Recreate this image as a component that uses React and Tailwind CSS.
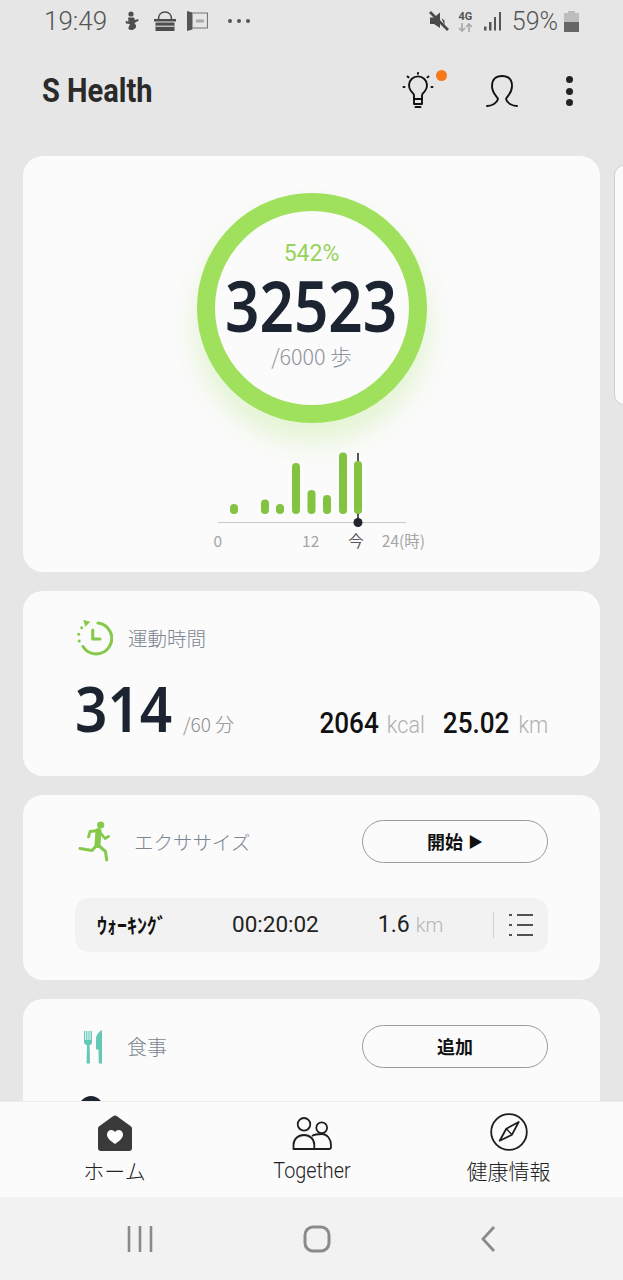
import React from "react";

const jp = { fontFamily: '"Noto Sans CJK JP", Roboto, sans-serif' };
const sans = "font-['Roboto','Noto_Sans_CJK_JP',sans-serif]";

function Bulb() {
  return (
    <svg width="34" height="40" viewBox="0 0 34 40" fill="none" stroke="#111" strokeWidth="1.900" strokeLinecap="round" strokeLinejoin="round">
      <path d="M13 28v-3.500c0-2-1.500-2.500-3-4.500a9 9 0 1 1 14 0c-1.500 2-3 2.500-3 4.500V28z" />
      <path d="M13 28h8v5h-8z" />
      <path d="M14.500 36h5" strokeWidth="2" />
      <path d="M17 2v.8M6.500 5.500l1 .8M27.500 5.500l-1 .8M2.500 16h1M30.500 16h1" strokeWidth="2" />
    </svg>
  );
}

function Person() {
  return (
    <svg width="32" height="34" viewBox="0 0 32 34" fill="none" stroke="#111" strokeWidth="1.900" strokeLinecap="round">
      <path d="M1 32C6 32 11 29 12 25C12 23 6 20 6 12C6 5 10 2 16 2C22 2 26 5 26 12C26 20 20 23 20 25C21 29 26 32 31 32" />
    </svg>
  );
}

function Chart() {
  const bars = [
    [230, 504], [261, 499.500], [276, 504], [292, 463], [307.500, 490], [323, 495], [339, 452.500], [354, 461],
  ];
  return (
    <svg width="200" height="80" viewBox="212 450 200 80" className="block">
      <line x1="218" y1="522.500" x2="406" y2="522.500" stroke="#c9c9c9" strokeWidth="1.200" />
      <line x1="358" y1="453" x2="358" y2="522" stroke="#1b1f28" strokeWidth="1.500" />
      {bars.map(([x, y]) => (
        <rect key={x} x={x} y={y} width="8" height={514 - y} rx="4" fill="#84c341" />
      ))}
      <circle cx="358" cy="522.500" r="4.500" fill="#22252c" />
    </svg>
  );
}

function ClockIcon() {
  return (
    <svg width="36" height="36" viewBox="0 0 36 36" fill="none" stroke="#84c94a" strokeWidth="3" strokeLinecap="round" strokeLinejoin="round">
      <path d="M21 3A15.500 15.500 0 1 1 6 26.500" />
      <path d="M15.700 10v9H23" />
      <circle cx="4.700" cy="7.700" r="1.500" fill="#84c94a" stroke="none" />
      <circle cx="1.700" cy="14.300" r="1.500" fill="#84c94a" stroke="none" />
      <circle cx="2.200" cy="21" r="1.500" fill="#84c94a" stroke="none" />
      <path d="M6.300 0l7 1.700-5 5z" fill="#84c94a" stroke="none" />
    </svg>
  );
}

function Runner() {
  return (
    <svg width="32" height="42" viewBox="0 0 32 42" fill="none" stroke="#84c94a" strokeLinecap="round" strokeLinejoin="round">
      <circle cx="22.700" cy="4" r="3.600" fill="#84c94a" stroke="none" />
      <path d="M20.500 10L19.500 24" strokeWidth="6" />
      <path d="M20 9.500L12 10.500 10.500 16M21 10L27 17.500 30.500 15.500" strokeWidth="2.800" />
      <path d="M20 24L27.500 30.500 28.700 39" strokeWidth="3" />
      <path d="M19 24L14 29.500 2 27.500" strokeWidth="3" />
    </svg>
  );
}

function Cutlery() {
  return (
    <svg width="20" height="34" viewBox="0 0 20 34" fill="#63c8b4">
      <path d="M1 1h1.200v9h1V1h1.200v9h1V1h1.200v9h1V1H9v11.500c0 1.500-1.500 2.300-2.400 2.800L7 33.500H3.600L4 15.300c-1-.5-3-1.300-3-2.800z" />
      <path d="M19 0v33.500h-3.200l-.3-14h-2.500V9c0-4 3-7.500 6-9z" />
    </svg>
  );
}

function ListIcon() {
  return (
    <svg width="26" height="24" viewBox="0 0 26 24" stroke="#1c1c1c" strokeWidth="1.500">
      <path d="M1 2h3M9 2h16M1 12h3M9 12h16M1 22h3M9 22h16" />
    </svg>
  );
}

function HomeIcon() {
  return (
    <svg width="36" height="37" viewBox="0 0 36 37" className="block">
      <path d="M1 13.500c0-1 .5-1.700 1.200-2.300L16 1.200c1.200-.9 2.800-.9 4 0l13.800 10c.7.6 1.200 1.300 1.200 2.300V33a3 3 0 0 1-3 3H4a3 3 0 0 1-3-3z" fill="#3a3a3a" />
      <path d="M18 29c-5-3.500-8-6-8-9.500 0-2.500 2-4.500 4.300-4.500 1.500 0 2.900.7 3.700 2 .8-1.300 2.200-2 3.700-2 2.300 0 4.300 2 4.300 4.500 0 3.500-3 6-8 9.500z" fill="#fff" />
    </svg>
  );
}

function PeopleIcon() {
  return (
    <svg width="40" height="37" viewBox="0 0 40 37" fill="none" stroke="#1e1e1e" strokeWidth="1.800" strokeLinejoin="round" className="block">
      <circle cx="12" cy="10.300" r="6.300" />
      <circle cx="29.700" cy="13.700" r="5.400" />
      <path d="M1.500 35V31C1.500 25 6 21 12 21C18 21 22.300 25 22.300 31V35Z" />
      <path d="M20 22C22 20.500 25 20 30 20C35 20 39 25 39 31V33A2 2 0 0 1 37 35H22.300" />
    </svg>
  );
}

function CompassIcon() {
  return (
    <svg width="38" height="38" viewBox="0 0 38 38" fill="none" stroke="#1e1e1e" strokeWidth="1.800" strokeLinejoin="round" className="block">
      <circle cx="19" cy="19" r="17.800" />
      <path d="M28.700 9L22 21.700 9.700 27.700 16.300 15.700z" />
      <path d="M16.300 15.700L22 21.700" strokeWidth="1.400" />
    </svg>
  );
}

function StatusIcons() {
  return (
    <div className="flex items-center ml-[16px]">
      <svg width="19" height="20" viewBox="0 0 19 20" fill="#4d4d4d">
        <circle cx="8" cy="3" r="2.600" />
        <path d="M5 6.500h6l1 2.500 3-1 .8 1.500-4.300 2.500 1.500 2.500c.5 2-1 4.500-5 4.500-2 0-3-1-2.500-2.500L7 13 3 12.500 2.500 10l3 .5z" />
      </svg>
      <svg width="24" height="20" viewBox="0 0 24 20" fill="#4d4d4d" className="ml-[11px]">
        <path d="M5.500 8C5.500 4 8 1 12 1s6.500 3 6.500 7" fill="none" stroke="#4d4d4d" strokeWidth="1.600" />
        <path d="M1 8h22v2.500H1zM2.500 11.500h19V20h-19z" />
        <path d="M2.500 14.500h19V16h-19z" fill="#bdbdbd" />
      </svg>
      <svg width="21" height="20" viewBox="0 0 21 20" fill="none" className="ml-[10px]">
        <path d="M0 0l5.500 1.500v17L0 20z" fill="#555" />
        <path d="M5.500 2h15v15h-15" stroke="#777" strokeWidth="1.200" />
        <path d="M9 8.500h8v3H9z" fill="#aaa" />
      </svg>
      <div className="flex gap-[5px] ml-[20px]">
        <span className="w-[4px] h-[4px] rounded-full bg-[#555]" />
        <span className="w-[4px] h-[4px] rounded-full bg-[#555]" />
        <span className="w-[4px] h-[4px] rounded-full bg-[#555]" />
      </div>
    </div>
  );
}

function StatusRight() {
  return (
    <div className="flex items-center">
      <svg width="20" height="20" viewBox="0 0 20 20" fill="#4a4a4a">
        <path d="M1 6.500h4L11 1.500V17L5 13H1z" />
        <path d="M12.500 7l3 2.500v5z" />
        <path d="M1 1l18 18" stroke="#4a4a4a" strokeWidth="2.600" />
      </svg>
      <div className="flex flex-col items-center ml-[9px] w-[15px]">
        <span className="text-[11px] leading-[11px] font-bold text-[#555]">4G</span>
        <svg width="15" height="9" viewBox="0 0 15 9" stroke="#aaa" strokeWidth="1.700" fill="none" className="mt-[1px]">
          <path d="M4 0v8M1 5l3 3 3-3M11 9V1M8 4l3-3 3 3" />
        </svg>
      </div>
      <svg width="18" height="20" viewBox="0 0 18 20" fill="#555" className="ml-[11px]">
        <rect x="0" y="15.500" width="2.500" height="4" />
        <rect x="5" y="11" width="2.500" height="8.500" />
        <rect x="10" y="6" width="2" height="13.500" />
        <rect x="15" y="1" width="2" height="18.500" />
      </svg>
      <span className="ml-[10px] mt-[2px] text-[25px] leading-[30px] text-[#555] font-light">59%</span>
      <svg width="15" height="21" viewBox="0 0 15 21" className="ml-[6px]">
        <path d="M4 0h7v2h4v19H0V2h4z" fill="#bdbdbd" />
        <rect x="0" y="11" width="15" height="10" fill="#666" />
      </svg>
    </div>
  );
}

function Card({ children, className = "" }) {
  return <section className={`rounded-[20px] bg-[#fbfbfb] ${className}`}>{children}</section>;
}

function PillButton({ children }) {
  return (
    <button className="w-[186px] h-[43px] rounded-full border-[1.500px] border-[#999] text-[18px] font-bold text-[#111] flex items-center justify-center" style={jp}>
      {children}
    </button>
  );
}

export default function App() {
  return (
    <div className={`w-[623px] h-[1280px] overflow-hidden relative flex flex-col bg-[#e6e6e6] ${sans}`}>
      <header className="shrink-0">
        <div className="h-[42px] flex items-center justify-between pl-[44px] pr-[44px]">
          <div className="flex items-center">
            <span className="text-[26px] leading-[30px] text-[#555] font-light">19:49</span>
            <StatusIcons />
          </div>
          <StatusRight />
        </div>
        <div className="h-[114px] pl-[42px] pr-[50px] flex justify-between pt-[26px]">
          <h1 className="text-[33px] leading-[46px] font-bold text-[#2a2a2a] origin-left scale-x-[0.88]">S Health</h1>
          <div className="flex items-center h-[46px]">
            <div className="relative">
              <Bulb />
              <span className="absolute -right-[12px] top-[-1px] w-[11px] h-[11px] rounded-full bg-[#f77a1a]" />
            </div>
            <div className="ml-[51px]"><Person /></div>
            <div className="ml-[48px] flex flex-col gap-[4.500px]">
              <span className="w-[7px] h-[7px] rounded-full bg-[#222]" />
              <span className="w-[7px] h-[7px] rounded-full bg-[#222]" />
              <span className="w-[7px] h-[7px] rounded-full bg-[#222]" />
            </div>
          </div>
        </div>
      </header>

      <div className="absolute left-[614px] top-[165px] w-[20px] h-[240px] rounded-[10px] bg-[#fafafa] border border-[#cfcfcf]" />

      <main className="flex-1 min-h-0 overflow-hidden pl-[23px] pr-[23px] flex flex-col gap-[19px]">
        <Card className="h-[416px] shrink-0 flex flex-col items-center">
          <div className="mt-[37px] w-[230px] h-[230px] rounded-full border-[18px] border-[#9fe05c] shadow-[0_18px_28px_rgba(160,225,100,0.28)] flex flex-col items-center bg-[#fbfbfb]">
            <span className="mt-[28px] text-[23px] leading-[30px] text-[#96d35c]">542%</span>
            <span className="text-[70px] leading-[50px] mt-[11px] font-semibold text-[#1b2430] font-['Noto_Sans',sans-serif] scale-x-[0.86]">32523</span>
            <span className="mt-[12px] text-[21.500px] leading-[28px] text-[#8f949c] font-light" style={jp}>/6000 歩</span>
          </div>
          <div className="mt-[27px] ml-[1px]"><Chart /></div>
          <div className="w-[212px] h-[18px] mt-[1px] ml-[14px] text-[15.500px] leading-[18px] text-[#a5a5a5]">
            <div className="flex items-center" style={jp}>
              <span className="w-[9px] ml-[1px] text-center">0</span>
              <span className="ml-[80px] w-[20px] text-center">12</span>
              <span className="ml-[29px] w-[16px] text-center text-[#555]">今</span>
              <span className="ml-[18px] whitespace-nowrap">24(時)</span>
            </div>
          </div>
        </Card>

        <Card className="h-[185px] shrink-0 pl-[52px] pr-[52px] pt-[29px]">
          <div className="flex items-center h-[36px]">
            <span className="ml-[2px]"><ClockIcon /></span>
            <span className="ml-[15px] text-[19.500px] text-[#7c8690] font-light" style={jp}>運動時間</span>
          </div>
          <div className="flex items-baseline mt-[17px]">
            <span className="text-[63px] leading-[70px] font-semibold text-[#1b2430] font-['Noto_Sans',sans-serif] origin-left scale-x-[0.9]">314</span>
            <span className="text-[19px] text-[#8c8c8c] font-light" style={jp}>/60 分</span>
            <div className="ml-auto flex items-baseline text-[#111] origin-right scale-x-[0.9] translate-y-[1px]">
              <span className="text-[29px] font-medium">2064</span>
              <span className="ml-[9px] text-[24px] text-[#b0b0b0] font-light">kcal</span>
              <span className="ml-[20px] text-[29px] font-medium">25.02</span>
              <span className="ml-[10px] text-[24px] text-[#b0b0b0] font-light">km</span>
            </div>
          </div>
        </Card>

        <Card className="h-[185px] shrink-0 pl-[52px] pr-[52px] pt-[25px]">
          <div className="flex items-center justify-between h-[43px]">
            <div className="flex items-center">
              <span className="ml-[3px]"><Runner /></span>
              <span className="ml-[24px] text-[19.500px] text-[#7c8690] font-light" style={jp}>エクササイズ</span>
            </div>
            <PillButton>開始 <span className="ml-[5px] text-[15px]">▶</span></PillButton>
          </div>
          <div className="mt-[35px] h-[54px] rounded-[14px] bg-[#f2f2f2] flex items-center pl-[22px] pr-[14px]">
            <span className="w-[135px] text-[21px] font-bold text-[#111] whitespace-nowrap origin-left scale-x-[0.95]" style={jp}>ｳｫｰｷﾝｸﾞ</span>
            <span className="text-[22.500px] text-[#222]">00:20:02</span>
            <span className="ml-[59px] text-[23px] text-[#222]">1.6</span>
            <span className="ml-[6px] text-[20px] text-[#b5b5b5] font-light">km</span>
            <span className="ml-auto h-[26px] w-px bg-[#cfcfcf]" />
            <span className="ml-[14px]"><ListIcon /></span>
          </div>
        </Card>

        <Card className="h-[300px] shrink-0 pl-[52px] pr-[52px] pt-[26px] relative">
          <div className="flex items-center justify-between h-[43px]">
            <div className="flex items-center">
              <span className="ml-[8px]"><Cutlery /></span>
              <span className="ml-[24px] text-[20px] text-[#7c8690] font-light" style={jp}>食事</span>
            </div>
            <PillButton>追加</PillButton>
          </div>
          <div className="mt-[28px] w-[24px] h-[24px] ml-[4px] rounded-full bg-[#1b2430]" />
        </Card>
      </main>

      <nav className="shrink-0 h-[96px] bg-[#fbfbfb] border-t border-[#ececec] grid grid-cols-3 px-[16px] z-10">
        <div className="flex flex-col items-center pt-[13px]">
          <HomeIcon />
          <span className="text-[21px] leading-[29px] mt-[4px] text-[#222] font-light" style={jp}>ホーム</span>
        </div>
        <div className="flex flex-col items-center pt-[12px]">
          <PeopleIcon />
          <span className="text-[22.500px] leading-[29px] mt-[5px] text-[#222] font-light origin-center scale-x-[0.88]">Together</span>
        </div>
        <div className="flex flex-col items-center pt-[11px]">
          <CompassIcon />
          <span className="text-[21px] leading-[29px] mt-[5px] text-[#222] font-light whitespace-nowrap" style={jp}>健康情報</span>
        </div>
      </nav>

      <div className="shrink-0 h-[83px] bg-[#f2f2f2] flex items-center justify-between pl-[127px] pr-[127px] z-10">
        <svg width="26" height="28" viewBox="0 0 26 28" stroke="#8a8a8a" strokeWidth="2.600"><path d="M2 1v26M13 1v26M24 1v26" /></svg>
        <svg width="28" height="28" viewBox="0 0 28 28" fill="none" stroke="#8a8a8a" strokeWidth="3"><rect x="2" y="2" width="24" height="24" rx="8" /></svg>
        <svg width="16" height="28" viewBox="0 0 16 28" fill="none" stroke="#8a8a8a" strokeWidth="2.800"><path d="M14 2L3 14l11 12" /></svg>
      </div>
    </div>
  );
}
